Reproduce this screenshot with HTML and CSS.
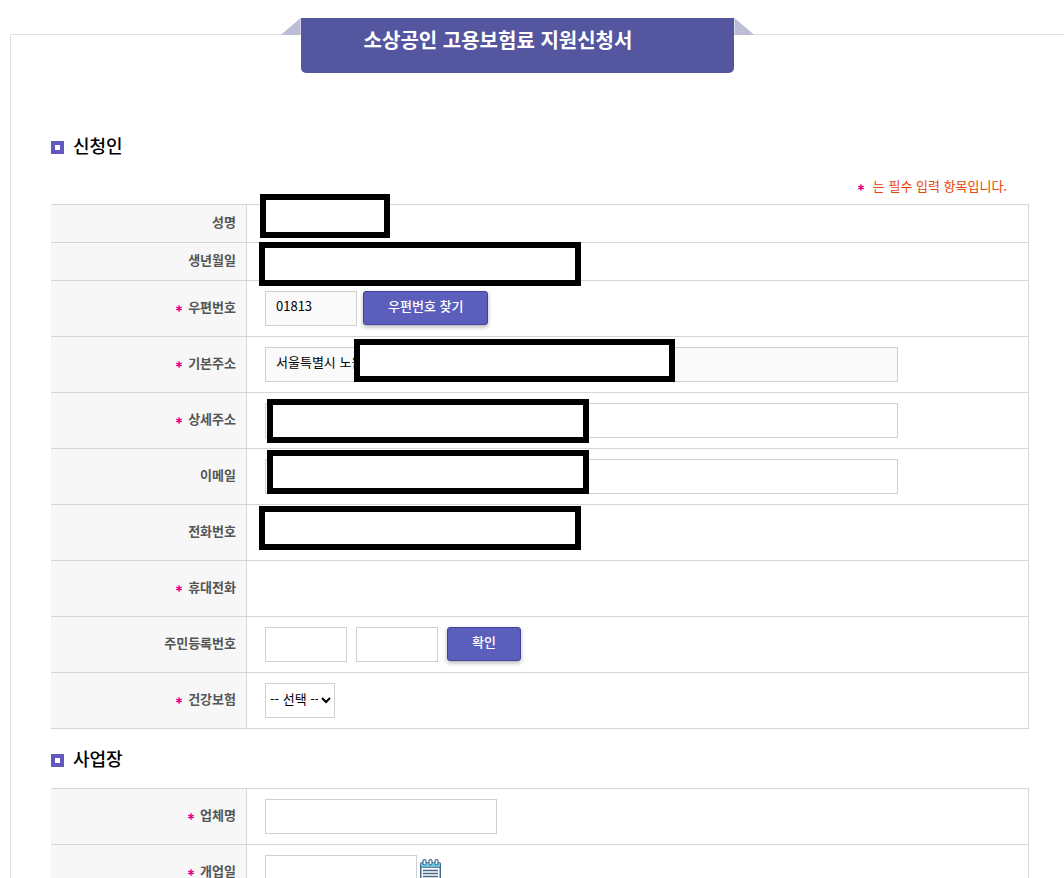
FILE: index.html
```
<!DOCTYPE html>
<html lang="ko">
<head>
    <meta charset="UTF-8">
    <meta name="viewport" content="width=device-width, initial-scale=1.0">
    <title>소상공인 고용보험료 지원신청서</title>
    <link rel="stylesheet" href="styles.css">
</head>
<body>
    <svg class="sprite" aria-hidden="true">
        <symbol id="star" viewBox="0 0 6 7">
            <path d="M3 0.3V6.7M0.3 2L5.7 5M5.7 2L0.3 5" stroke="currentColor" stroke-width="1.4" fill="none"/>
        </symbol>
    </svg>

    <form class="apply-form">
        <div class="banner-wrap">
            <h1 class="banner">소상공인 고용보험료 지원신청서</h1>
        </div>

        <h2 class="section-title">신청인</h2>
        <p class="notice"><svg class="star"><use href="#star"/></svg>는 필수 입력 항목입니다.</p>
        <table class="form-table">
            <tr class="row-short">
                <th scope="row">성명</th>
                <td><span class="mask mask-name"></span></td>
            </tr>
            <tr class="row-short">
                <th scope="row">생년월일</th>
                <td><span class="mask mask-birth"></span></td>
            </tr>
            <tr>
                <th scope="row"><svg class="star"><use href="#star"/></svg><label for="zipcode">우편번호</label></th>
                <td>
                    <div class="field">
                        <input type="text" id="zipcode" class="w-zip" value="01813" readonly>
                        <button type="button" class="btn">우편번호 찾기</button>
                    </div>
                </td>
            </tr>
            <tr>
                <th scope="row"><svg class="star"><use href="#star"/></svg><label for="addr1">기본주소</label></th>
                <td>
                    <div class="field">
                        <input type="text" id="addr1" class="w-long" value="서울특별시 노원" readonly>
                    </div>
                    <span class="mask mask-addr1"></span>
                </td>
            </tr>
            <tr>
                <th scope="row"><svg class="star"><use href="#star"/></svg><label for="addr2">상세주소</label></th>
                <td>
                    <div class="field">
                        <input type="text" id="addr2" class="w-long">
                    </div>
                    <span class="mask mask-addr2"></span>
                </td>
            </tr>
            <tr>
                <th scope="row"><label for="email">이메일</label></th>
                <td>
                    <div class="field">
                        <input type="text" id="email" class="w-long">
                    </div>
                    <span class="mask mask-email"></span>
                </td>
            </tr>
            <tr>
                <th scope="row">전화번호</th>
                <td><span class="mask mask-tel"></span></td>
            </tr>
            <tr>
                <th scope="row"><svg class="star"><use href="#star"/></svg>휴대전화</th>
                <td></td>
            </tr>
            <tr>
                <th scope="row"><label for="jumin1">주민등록번호</label></th>
                <td>
                    <div class="field field-jumin">
                        <input type="text" id="jumin1" class="w-jumin">
                        <input type="password" id="jumin2" class="w-jumin" aria-label="주민등록번호 뒷자리">
                        <button type="button" class="btn">확인</button>
                    </div>
                </td>
            </tr>
            <tr>
                <th scope="row"><svg class="star"><use href="#star"/></svg><label for="insurance">건강보험</label></th>
                <td>
                    <div class="field">
                        <select id="insurance">
                            <option>-- 선택 --</option>
                        </select>
                    </div>
                </td>
            </tr>
        </table>

        <h2 class="section-title">사업장</h2>
        <table class="form-table">
            <tr>
                <th scope="row"><svg class="star"><use href="#star"/></svg><label for="company">업체명</label></th>
                <td>
                    <div class="field">
                        <input type="text" id="company" class="w-company">
                    </div>
                </td>
            </tr>
            <tr>
                <th scope="row"><svg class="star"><use href="#star"/></svg><label for="opendate">개업일</label></th>
                <td>
                    <div class="field field-date">
                        <input type="text" id="opendate" class="w-date">
                        <button type="button" class="btn-cal" aria-label="달력">
                            <svg width="21" height="24" viewBox="0 0 21 24">
                                <rect x="0.75" y="3.75" width="19.5" height="19.5" rx="1" fill="#fff" stroke="#44688c" stroke-width="1.5"/>
                                <path d="M1.5 3.5h18v4.5h-18z" fill="#6fd0f0"/>
                                <path d="M1 8.3h19" stroke="#44688c"/>
                                <g fill="#fff" stroke="#44688c" stroke-width="1.2">
                                    <rect x="3" y="0.6" width="3" height="5.4" rx="1.5"/>
                                    <rect x="9" y="0.6" width="3" height="5.4" rx="1.5"/>
                                    <rect x="15" y="0.6" width="3" height="5.4" rx="1.5"/>
                                </g>
                                <path d="M3 11.5h15M3 14.5h15M3 17.5h15M3 20.5h15" stroke="#44688c" stroke-width="1.3"/>
                            </svg>
                        </button>
                    </div>
                </td>
            </tr>
        </table>
    </form>
</body>
</html>
```

FILE: styles.css
```
*,
*::before,
*::after {
    box-sizing: border-box;
}
html {
    overflow-x: hidden;
}
body {
    margin: 0;
    padding-top: 34px;
    background-color: #fff;
    color: #000;
    font-family: "Noto Sans CJK KR", sans-serif;
    font-size: 13px;
    line-height: 20px;
    overflow-x: hidden;
}
.sprite {
    display: none;
}
.apply-form {
    margin: 0 -6px 0 10px;
    padding: 0 40px 40px;
    border: 1px solid #e0e0e0;
}

/* title ribbon */
.banner-wrap {
    display: flex;
    justify-content: center;
    margin-top: -17px;
    padding-right: 45px;
}
.banner {
    position: relative;
    margin: 0;
    padding: 7px 102px 18px 63px;
    border-radius: 0 0 5px 5px;
    background-color: #54569f;
    color: #fff;
    font-size: 20px;
    line-height: 30px;
    font-weight: 700;
}
.banner::before,
.banner::after {
    content: "";
    position: absolute;
    top: 0;
    width: 20px;
    height: 17px;
    background-color: #bdbdd8;
}
.banner::before {
    right: 100%;
    clip-path: polygon(100% 0, 100% 100%, 0 100%);
}
.banner::after {
    left: 100%;
    clip-path: polygon(0 0, 100% 100%, 0 100%);
}

.section-title {
    display: flex;
    align-items: center;
    gap: 9px;
    margin: 15px 0 16px;
    font-size: 18px;
    line-height: 28px;
    font-weight: 500;
}
.section-title::before {
    content: "";
    width: 13px;
    height: 13px;
    margin-top: 5px;
    border: 4px solid #6159bd;
    background-color: #fff;
}
.banner-wrap + .section-title {
    margin-top: 58px;
}
.notice {
    margin: 17px 22px 8px 0;
    text-align: right;
    color: #e8440c;
}
.notice .star {
    margin-right: 9px;
}
.star {
    width: 6px;
    height: 7px;
    margin-right: 6px;
    color: #e0007a;
}

.form-table {
    width: 100%;
    border-collapse: separate;
    border-spacing: 0;
    border-top: 1px solid #d5d5d5;
    border-right: 1px solid #d5d5d5;
}
.form-table tr {
    height: 56px;
}
.form-table .row-short {
    height: 38px;
}
.form-table th {
    width: 196px;
    padding: 0 10px 3px;
    border-right: 1px solid #d5d5d5;
    border-bottom: 1px solid #d5d5d5;
    background-color: #f7f7f7;
    color: #555;
    font-weight: 700;
    text-align: right;
}
.form-table td {
    position: relative;
    padding: 0 18px;
    border-bottom: 1px solid #d5d5d5;
}
.field {
    display: flex;
    align-items: flex-start;
    gap: 6px;
}
.field-jumin {
    gap: 9px;
}
.field-date {
    gap: 3px;
}

input,
select {
    height: 35px;
    margin: 0;
    border: 1px solid #d0d0d0;
    border-radius: 0;
    background-color: #fff;
    color: #000;
    font: inherit;
}
input {
    padding: 0 10px 6px;
}
input[readonly] {
    background-color: #fafafa;
}
select {
    width: 70px;
    padding: 0 0 4px;
}
.w-zip {
    width: 92px;
}
.w-long {
    width: 633px;
}
.w-jumin {
    width: 82px;
}
.w-company {
    width: 232px;
}
.w-date {
    width: 152px;
}
.btn {
    height: 34px;
    padding: 0 24px 5px;
    border: 1px solid #42429a;
    border-radius: 3px;
    background-color: #5c5ebb;
    box-shadow: 0 2px 4px rgba(0, 0, 0, 0.3);
    color: #fff;
    font: inherit;
    font-weight: 500;
    cursor: pointer;
}
.btn-cal {
    display: flex;
    padding: 4px 0 0;
    border: none;
    background: none;
    cursor: pointer;
}

/* boxes covering personal data */
.mask {
    position: absolute;
    z-index: 1;
    width: 322px;
    height: 44px;
    border: 6px solid #000;
    background-color: #fff;
}
.mask-name {
    top: -11px;
    left: 13px;
    width: 130px;
}
.mask-birth {
    top: -1px;
    left: 12px;
}
.mask-addr1 {
    top: 2px;
    left: 107px;
    width: 321px;
    height: 43px;
}
.mask-addr2 {
    top: 6px;
    left: 20px;
}
.mask-email {
    top: 1px;
    left: 20px;
}
.mask-tel {
    top: 1px;
    left: 12px;
}
```
